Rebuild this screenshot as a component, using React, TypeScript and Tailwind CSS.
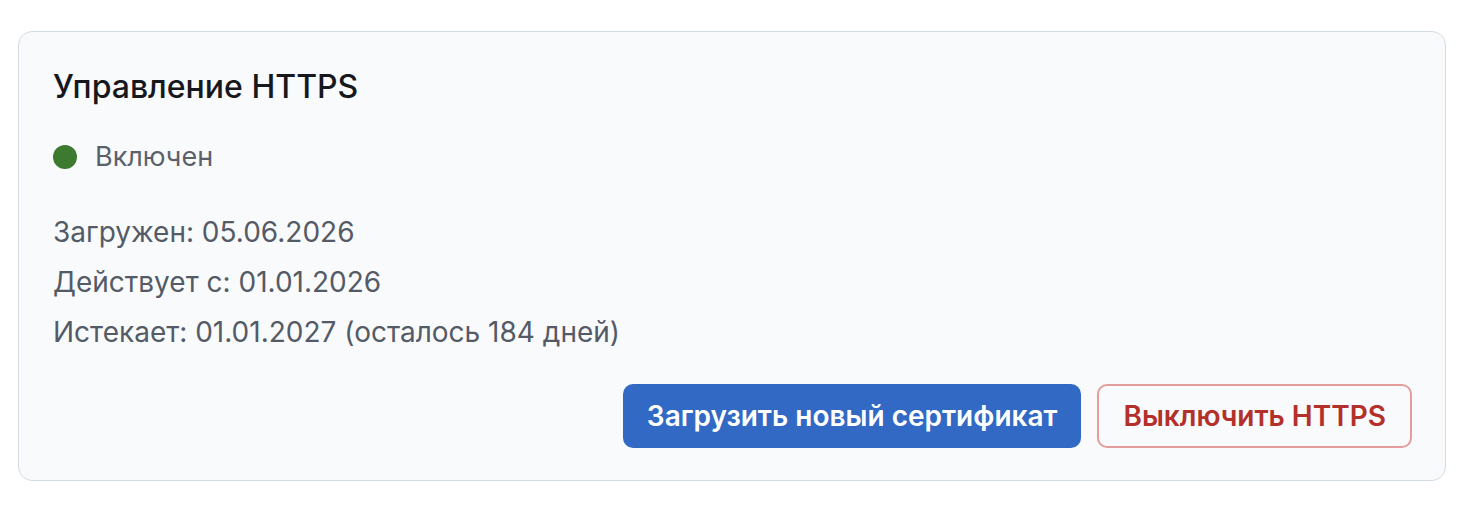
export default function App() {
  const details = [
    'Загружен: 05.06.2026',
    'Действует с: 01.01.2026',
    'Истекает: 01.01.2027 (осталось 184 дней)',
  ];

  return (
    <div className="min-h-screen bg-white pl-[18px] pt-[31px] font-['Inter',sans-serif]">
      <div className="w-[1428px] rounded-[14px] border border-[#d3dbe5] bg-[#f9fafc] pb-[32px] pl-[34px] pr-[33px] pt-[35px]">
        <h2 className="text-[32px] font-medium leading-[40px] text-[#16181d]">Управление HTTPS</h2>

        <div className="mt-[30px] flex h-[40px] items-center gap-[18px]">
          <span className="h-[24px] w-[24px] rounded-full bg-[#3c7a2f]" />
          <span className="text-[27px] text-[#5a616d]">Включен</span>
        </div>

        <div className="mt-[30px] text-[28px] leading-[50px] text-[#545b66]">
          {details.map((line) => (
            <p key={line}>{line}</p>
          ))}
        </div>

        <div className="mt-[27px] flex justify-end gap-[16px]">
          <button className="h-[64px] rounded-[10px] bg-[#3169c4] px-[24px] text-[28px] font-semibold text-white">
            Загрузить новый сертификат
          </button>
          <button className="h-[64px] rounded-[10px] border-2 border-[#e39d9c] bg-transparent px-[24px] text-[28px] font-semibold text-[#b3302b]">
            Выключить HTTPS
          </button>
        </div>
      </div>
    </div>
  );
}
